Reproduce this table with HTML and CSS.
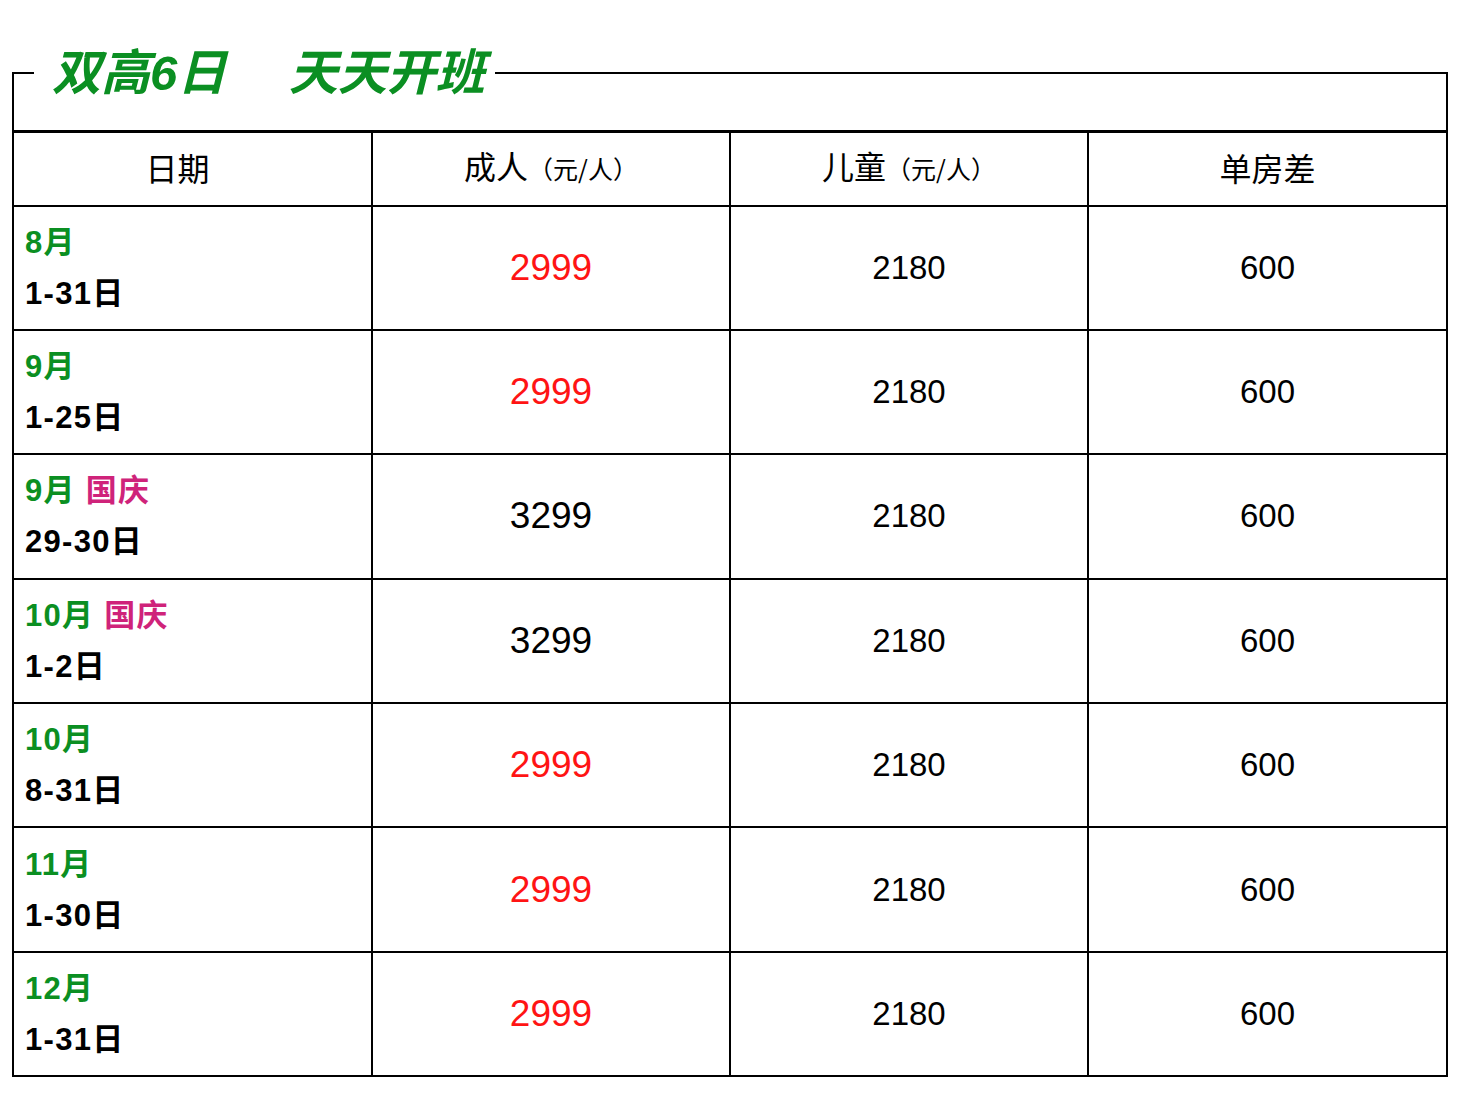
FILE: index.html
```html
<!DOCTYPE html>
<html lang="zh-CN">
<head>
<meta charset="utf-8">
<title>双高6日 天天开班</title>
<link rel="stylesheet" href="styles.css">
</head>
<body>
<fieldset class="box">
  <legend class="title">双高6日&nbsp;　天天开班</legend>
  <div class="spacer"></div>
  <table class="price">
    <thead>
      <tr>
        <th class="first">日期</th>
        <th>成人<span class="unit">（元/人）</span></th>
        <th>儿童<span class="unit">（元/人）</span></th>
        <th>单房差</th>
      </tr>
    </thead>
    <tbody>
      <tr>
        <td class="date"><div class="m">8月</div><div class="d">1-31日</div></td>
        <td class="adult red">2999</td>
        <td class="num">2180</td>
        <td class="num">600</td>
      </tr>
      <tr>
        <td class="date"><div class="m">9月</div><div class="d">1-25日</div></td>
        <td class="adult red">2999</td>
        <td class="num">2180</td>
        <td class="num">600</td>
      </tr>
      <tr>
        <td class="date"><div class="m">9月 <span class="hol">国庆</span></div><div class="d">29-30日</div></td>
        <td class="adult">3299</td>
        <td class="num">2180</td>
        <td class="num">600</td>
      </tr>
      <tr>
        <td class="date"><div class="m">10月 <span class="hol">国庆</span></div><div class="d">1-2日</div></td>
        <td class="adult">3299</td>
        <td class="num">2180</td>
        <td class="num">600</td>
      </tr>
      <tr>
        <td class="date"><div class="m">10月</div><div class="d">8-31日</div></td>
        <td class="adult red">2999</td>
        <td class="num">2180</td>
        <td class="num">600</td>
      </tr>
      <tr>
        <td class="date"><div class="m">11月</div><div class="d">1-30日</div></td>
        <td class="adult red">2999</td>
        <td class="num">2180</td>
        <td class="num">600</td>
      </tr>
      <tr>
        <td class="date"><div class="m">12月</div><div class="d">1-31日</div></td>
        <td class="adult red">2999</td>
        <td class="num">2180</td>
        <td class="num">600</td>
      </tr>
    </tbody>
  </table>
</fieldset>
</body>
</html>
```

FILE: styles.css
```css
html, body {
  margin: 0;
  padding: 0;
  background: #ffffff;
}

body {
  font-family: "Liberation Sans", "Noto Sans CJK SC", sans-serif;
  color: #000000;
  padding-top: 45px;
}

.box {
  margin: 0 22px 0 12px;
  padding: 0;
  border: 2px solid #000000;
  min-width: 0;
}

.title {
  margin-left: 20px;
  padding: 0 10px 0 18px;
  font-family: "Liberation Sans", "Noto Sans CJK SC", sans-serif;
  font-size: 49px;
  line-height: 56px;
  font-weight: 700;
  font-style: italic;
  color: #0b8f22;
  letter-spacing: 0;
}

.spacer {
  height: 29px;
}

.price {
  width: 100%;
  border-collapse: collapse;
  table-layout: fixed;
  border-top: 3px solid #000000;
}

.price th,
.price td {
  border: 2px solid #000000;
  padding: 0;
  text-align: center;
  vertical-align: middle;
}

.price tr > :first-child {
  border-left: none;
}

.price tr > :last-child {
  border-right: none;
}

.price tbody tr:last-child td {
  border-bottom: none;
}

.price th {
  height: 74px;
  font-weight: 400;
  font-size: 32px;
  line-height: 38px;
  padding-bottom: 4px;
  box-sizing: border-box;
  font-family: "Noto Sans CJK SC", sans-serif;
}

.price th.first {
  padding-right: 30px;
}

.unit {
  font-size: 25px;
}

.price td {
  height: 122.4px;
}

.date {
  text-align: left !important;
  padding-left: 11px !important;
  font-weight: 700;
  font-size: 31px;
  line-height: 51px;
  letter-spacing: 1.3px;
}

.m {
  color: #0b8f22;
}

.hol {
  color: #cf237a;
}

.d {
  color: #000000;
}

.adult {
  font-size: 37px;
}

.red {
  color: #ff1414;
}

.num {
  font-size: 33px;
}
```
